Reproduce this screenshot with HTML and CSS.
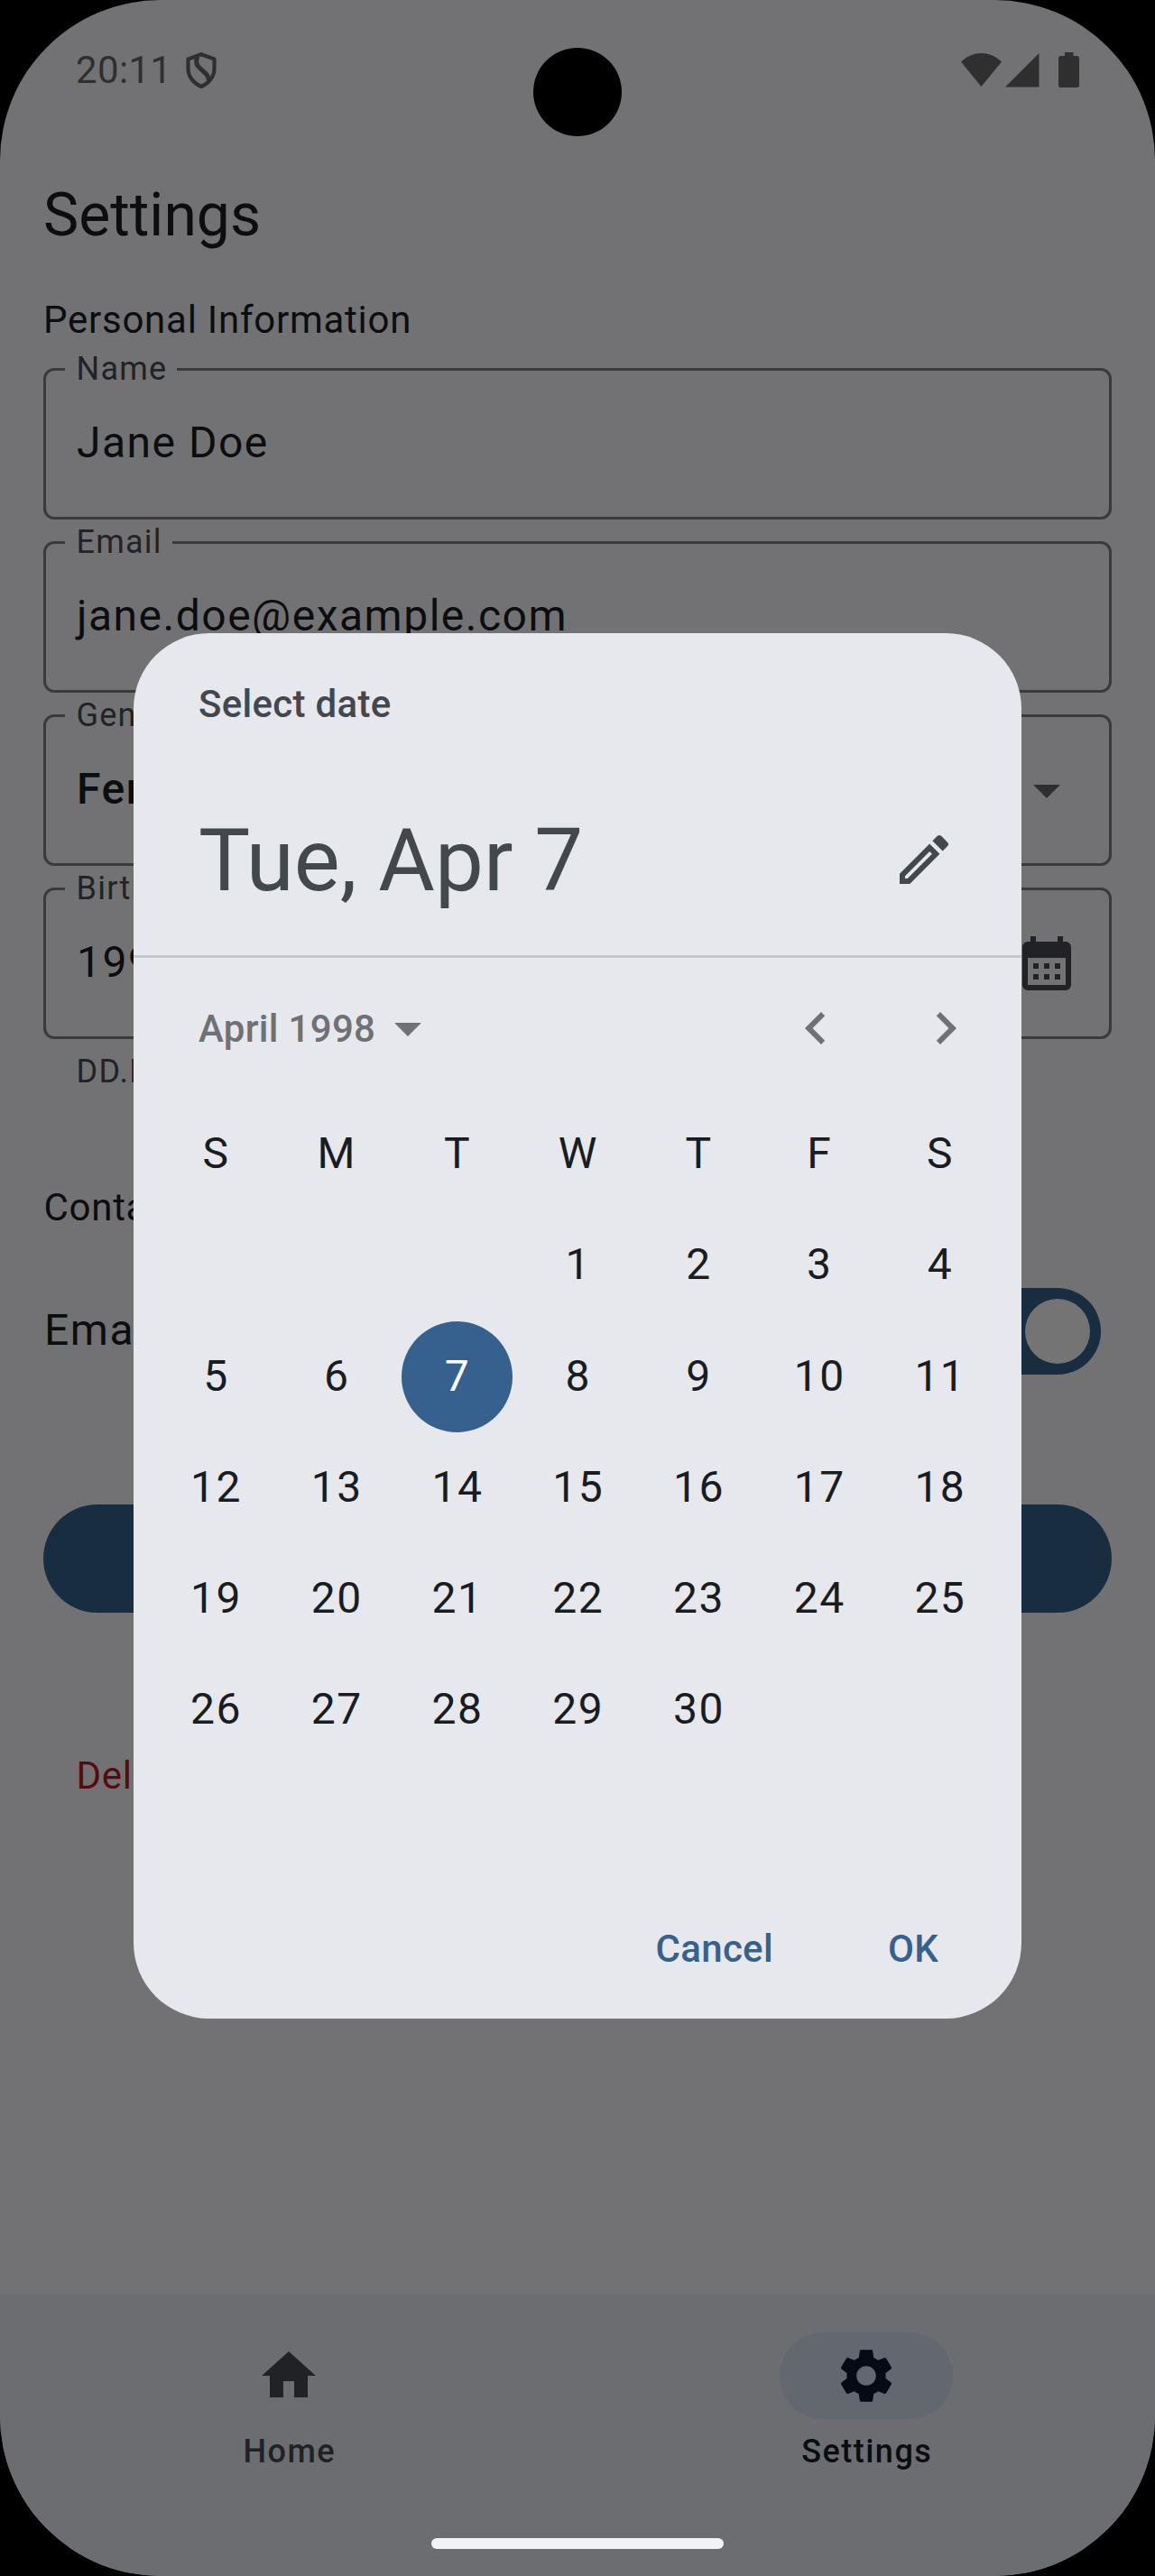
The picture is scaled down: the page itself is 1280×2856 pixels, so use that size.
FILE: index.html
```
<!DOCTYPE html>
<html lang="en">
<head>
<meta charset="utf-8">
<title>Settings</title>
<link rel="stylesheet" href="styles.css">
</head>
<body>
<div class="phone">
  <header class="status">
    <span class="clock">20:11</span>
    <svg class="shield" viewBox="0 0 34 40" width="34" height="40" fill="none" stroke="currentColor" stroke-width="4.2" stroke-linejoin="round"><path d="M17 2.2 31.500 7.500V18c0 9-6 16.500-14.500 20C8.500 34.500 2.500 27 2.500 18V7.500z"/><path d="M12.500 5c-2 8 0 10 5 14.500s7.500 6 8 12" stroke-width="5"/></svg>
    <span class="spacer"></span>
    <svg viewBox="0 0 132 40" width="132" height="40" fill="currentColor"><path d="M0 10.500Q9.500 1 22.500 1T45 10.500L22.500 38zM49 38.500 86.500 1v37.500zM115 0h9.500v4h4a2.500 2.500 0 0 1 2.500 2.500v30a2.500 2.500 0 0 1-2.500 2.500h-18a2.500 2.500 0 0 1-2.500-2.500v-30a2.500 2.500 0 0 1 2.500-2.500h4.500z"/></svg>
  </header>
  <h1 class="title">Settings</h1>
  <main class="form">
    <h2 class="section">Personal Information</h2>
    <div class="fields">
      <div class="field"><span class="label">Name</span><span class="value">Jane Doe</span></div>
      <div class="field"><span class="label">Email</span><span class="value">jane.doe@example.com</span></div>
      <div class="field"><span class="label">Gender</span><span class="value strong">Female</span>
        <svg class="caret" viewBox="0 0 24 24" width="72" height="72"><path d="M7 10l5 5 5-5z"/></svg></div>
      <div class="field"><span class="label">Birth</span><span class="value">1998-04-07</span>
        <svg class="calendar" viewBox="0 0 24 24" width="72" height="72"><path fill-rule="evenodd" d="M6 2h2v2h8V2h2v2h1a2 2 0 0 1 2 2v14a2 2 0 0 1-2 2H5a2 2 0 0 1-2-2V6a2 2 0 0 1 2-2h1zM5 10v10h14V10zM7 12h2v2H7zM11 12h2v2h-2zM15 12h2v2h-2zM7 16h2v2H7zM11 16h2v2h-2zM15 16h2v2h-2z"/></svg></div>
    </div>
    <p class="hint">DD.MM.YYYY</p>
    <h2 class="section contact">Contact</h2>
    <div class="toggle-row"><span>Email</span><span class="switch"><span class="thumb"></span></span></div>
    <div class="save"></div>
    <p class="delete">Delete</p>
  </main>
  <nav class="nav">
    <div class="nav-item">
      <span class="pill"><svg viewBox="0 0 24 24" width="72" height="72"><path d="M10 20v-6h4v6h5v-8h3L12 3 2 12h3v8z"/></svg></span>
      <span class="nav-label">Home</span>
    </div>
    <div class="nav-item active">
      <span class="pill"><svg viewBox="0 0 24 24" width="72" height="72"><path d="M19.140 12.940c.04-.3.06-.61.06-.94 0-.32-.02-.64-.07-.94l2.030-1.580c.18-.14.23-.41.12-.61l-1.920-3.320c-.12-.22-.37-.29-.59-.22l-2.390.96c-.5-.38-1.030-.7-1.620-.94l-.36-2.540c-.04-.24-.24-.41-.48-.41h-3.840c-.24 0-.43.17-.47.41l-.36 2.540c-.59.24-1.130.57-1.620.94l-2.390-.96c-.22-.08-.47 0-.59.22L2.740 8.870c-.12.21-.08.47.12.61l2.030 1.580c-.05.3-.09.63-.09.94s.02.64.07.94l-2.030 1.580c-.18.14-.23.41-.12.61l1.920 3.320c.12.22.37.29.59.22l2.390-.96c.5.38 1.030.7 1.620.94l.36 2.540c.05.24.24.41.48.41h3.840c.24 0 .44-.17.47-.41l.36-2.540c.59-.24 1.130-.56 1.620-.94l2.390.96c.22.08.47 0 .59-.22l1.920-3.320c.12-.22.07-.47-.12-.61l-2.010-1.580zM12 15.600c-1.980 0-3.600-1.620-3.600-3.600s1.620-3.600 3.600-3.600 3.600 1.620 3.600 3.600-1.620 3.600-3.600 3.600z"/></svg></span>
      <span class="nav-label">Settings</span>
    </div>
  </nav>
  <div class="camera"></div>
  <div class="gesture"></div>
  <section class="dialog">
    <p class="dialog-title">Select date</p>
    <div class="headline">
      <span>Tue, Apr 7</span>
      <svg viewBox="0 0 24 24" width="72" height="72"><path fill-rule="evenodd" d="M3 17.250V21h3.750L17.810 9.940l-3.750-3.750zM5.920 19H5v-.92l9.060-9.060.92.92zM20.710 7.040c.39-.39.39-1.020 0-1.410l-2.340-2.340c-.39-.39-1.020-.39-1.410 0l-1.830 1.830 3.750 3.750z"/></svg>
    </div>
    <div class="month">
      <span>April 1998</span>
      <svg viewBox="0 0 24 24" width="72" height="72"><path d="M7 10l5 5 5-5z"/></svg>
      <span class="spacer"></span>
      <span class="arrow"><svg viewBox="0 0 24 24" width="72" height="72"><path d="M15.410 16.590 10.830 12l4.580-4.590L14 6l-6 6 6 6z"/></svg></span>
      <span class="arrow"><svg viewBox="0 0 24 24" width="72" height="72"><path d="M8.590 16.590 13.170 12 8.590 7.410 10 6l6 6-6 6z"/></svg></span>
    </div>
    <div class="days">
      <span>S</span><span>M</span><span>T</span><span>W</span><span>T</span><span>F</span><span>S</span>
      <span></span><span></span><span></span><span>1</span><span>2</span><span>3</span><span>4</span>
      <span>5</span><span>6</span><span class="selected">7</span><span>8</span><span>9</span><span>10</span><span>11</span>
      <span>12</span><span>13</span><span>14</span><span>15</span><span>16</span><span>17</span><span>18</span>
      <span>19</span><span>20</span><span>21</span><span>22</span><span>23</span><span>24</span><span>25</span>
      <span>26</span><span>27</span><span>28</span><span>29</span><span>30</span>
    </div>
    <div class="actions"><span>Cancel</span><span>OK</span></div>
  </section>
</div>
</body>
</html>
```
FILE: styles.css
```
* { box-sizing: border-box; }
body { margin: 0; background: #000; font-family: Roboto, sans-serif; }
h1, h2, p { margin: 0; font-weight: 400; }
svg { display: block; flex: none; fill: currentColor; }
.spacer { flex: 1; }

.phone {
  position: relative;
  display: flex;
  flex-direction: column;
  width: 1280px;
  height: 2856px;
  overflow: hidden;
  border-radius: 178px;
  background: #727274;
  color: #0c0d0f;
}

.status {
  display: flex;
  align-items: center;
  height: 156px;
  padding: 0 83px 0 84px;
  color: #2f2f2f;
  font-size: 42px;
}
.clock { width: 122px; padding-bottom: 1px; letter-spacing: 0.4px; }
.shield { fill: none; }
.title { height: 165px; padding-left: 48px; font-size: 66px; line-height: 165px; }

.form { padding: 4px 48px 0; }
.section { font-size: 42px; line-height: 60px; letter-spacing: 0.75px; }
.fields { display: flex; flex-direction: column; gap: 24px; margin-top: 23px; }
.field {
  position: relative;
  display: flex;
  align-items: center;
  justify-content: space-between;
  height: 168px;
  padding: 0 33px;
  border: 3px solid #383a3c;
  border-radius: 12px;
}
.label {
  position: absolute;
  top: -25px;
  left: 21px;
  padding: 0 11px 0 12.6px;
  background: #727274;
  color: #212327;
  font-size: 36px;
  line-height: 46px;
  letter-spacing: 1.2px;
}
.value { padding: 0 0 2px 1px; font-size: 48px; line-height: 72px; letter-spacing: 1.5px; }
.strong { font-weight: 500; }
.caret { color: #2f2f2f; }
.calendar { color: #202226; }
.hint { margin-top: 12px; padding-left: 36.6px; color: #212327; font-size: 36px; line-height: 48px; letter-spacing: 1.2px; }
.contact { margin-top: 97px; padding-left: 0.4px; }
.toggle-row {
  display: flex;
  align-items: center;
  justify-content: space-between;
  height: 96px;
  margin-top: 59px;
  padding: 0 12px 0 1px;
  font-size: 48px;
  line-height: 90px;
  letter-spacing: 1.5px;
}
.toggle-row > span:first-child { padding-bottom: 3px; }
.switch {
  display: flex;
  align-items: center;
  justify-content: flex-end;
  width: 156px;
  height: 96px;
  padding: 12px;
  border-radius: 48px;
  background: #192d41;
}
.thumb { width: 72px; height: 72px; border-radius: 50%; background: #747474; }
.save { height: 120px; margin-top: 144px; border-radius: 60px; background: #192d41; }
.delete { margin-top: 151px; padding-left: 36.5px; color: #560c0c; font-size: 42px; line-height: 60px; letter-spacing: 0.75px; }

.nav { display: flex; height: 312px; margin-top: auto; padding-top: 42px; background: #6c6d70; }
.nav-item { display: flex; flex: 1; flex-direction: column; align-items: center; color: #202226; }
.pill { display: flex; align-items: center; justify-content: center; width: 192px; height: 96px; border-radius: 48px; }
.nav-label { margin-top: 12px; padding-left: 1.5px; font-size: 36px; font-weight: 500; line-height: 48px; letter-spacing: 1.5px; }
.active { color: #0c0d0f; }
.active .pill { background: #636770; color: #040b14; }

.camera { position: absolute; top: 53px; left: 591px; width: 98px; height: 98px; border-radius: 50%; background: #000; }
.gesture { position: absolute; top: 2814px; left: 478px; width: 324px; height: 12px; border-radius: 6px; background: #f2f4f4; }

.dialog {
  position: absolute;
  top: 702px;
  left: 148px;
  display: flex;
  flex-direction: column;
  width: 984px;
  height: 1536px;
  border-radius: 84px;
  background: #e6e8ed;
  color: #43474e;
}
.dialog-title { padding: 49px 72px 0; font-size: 42px; font-weight: 500; line-height: 60px; letter-spacing: 0.3px; }
.headline {
  display: flex;
  align-items: center;
  justify-content: space-between;
  height: 251px;
  padding: 35px 72px 0;
  border-bottom: 3px solid #c3c7cf;
  font-size: 96px;
}
.headline span { padding-top: 2px; }
.month { display: flex; align-items: center; height: 156px; padding: 0 12px 0 72px; color: #6e7176; font-size: 42px; font-weight: 500; letter-spacing: 0.3px; }
.arrow { display: flex; justify-content: center; width: 144px; }
.days {
  display: grid;
  grid-template-columns: repeat(7, 1fr);
  grid-auto-rows: 123px;
  justify-items: center;
  margin-top: 1px;
  padding: 0 24px;
  color: #191c20;
  font-size: 48px;
  line-height: 121px;
  letter-spacing: 1.5px;
  text-align: center;
}
.days span { width: 123px; padding-left: 1.5px; }
.days span:nth-child(-n+14) { line-height: 119px; }
.days .selected { border-radius: 50%; background: #36618e; color: #fff; }
.actions {
  display: flex;
  justify-content: flex-end;
  gap: 127px;
  margin-top: auto;
  padding: 0 92px 47px 0;
  color: #36618e;
  font-size: 42px;
  font-weight: 500;
  line-height: 60px;
  letter-spacing: 0.3px;
}
```
